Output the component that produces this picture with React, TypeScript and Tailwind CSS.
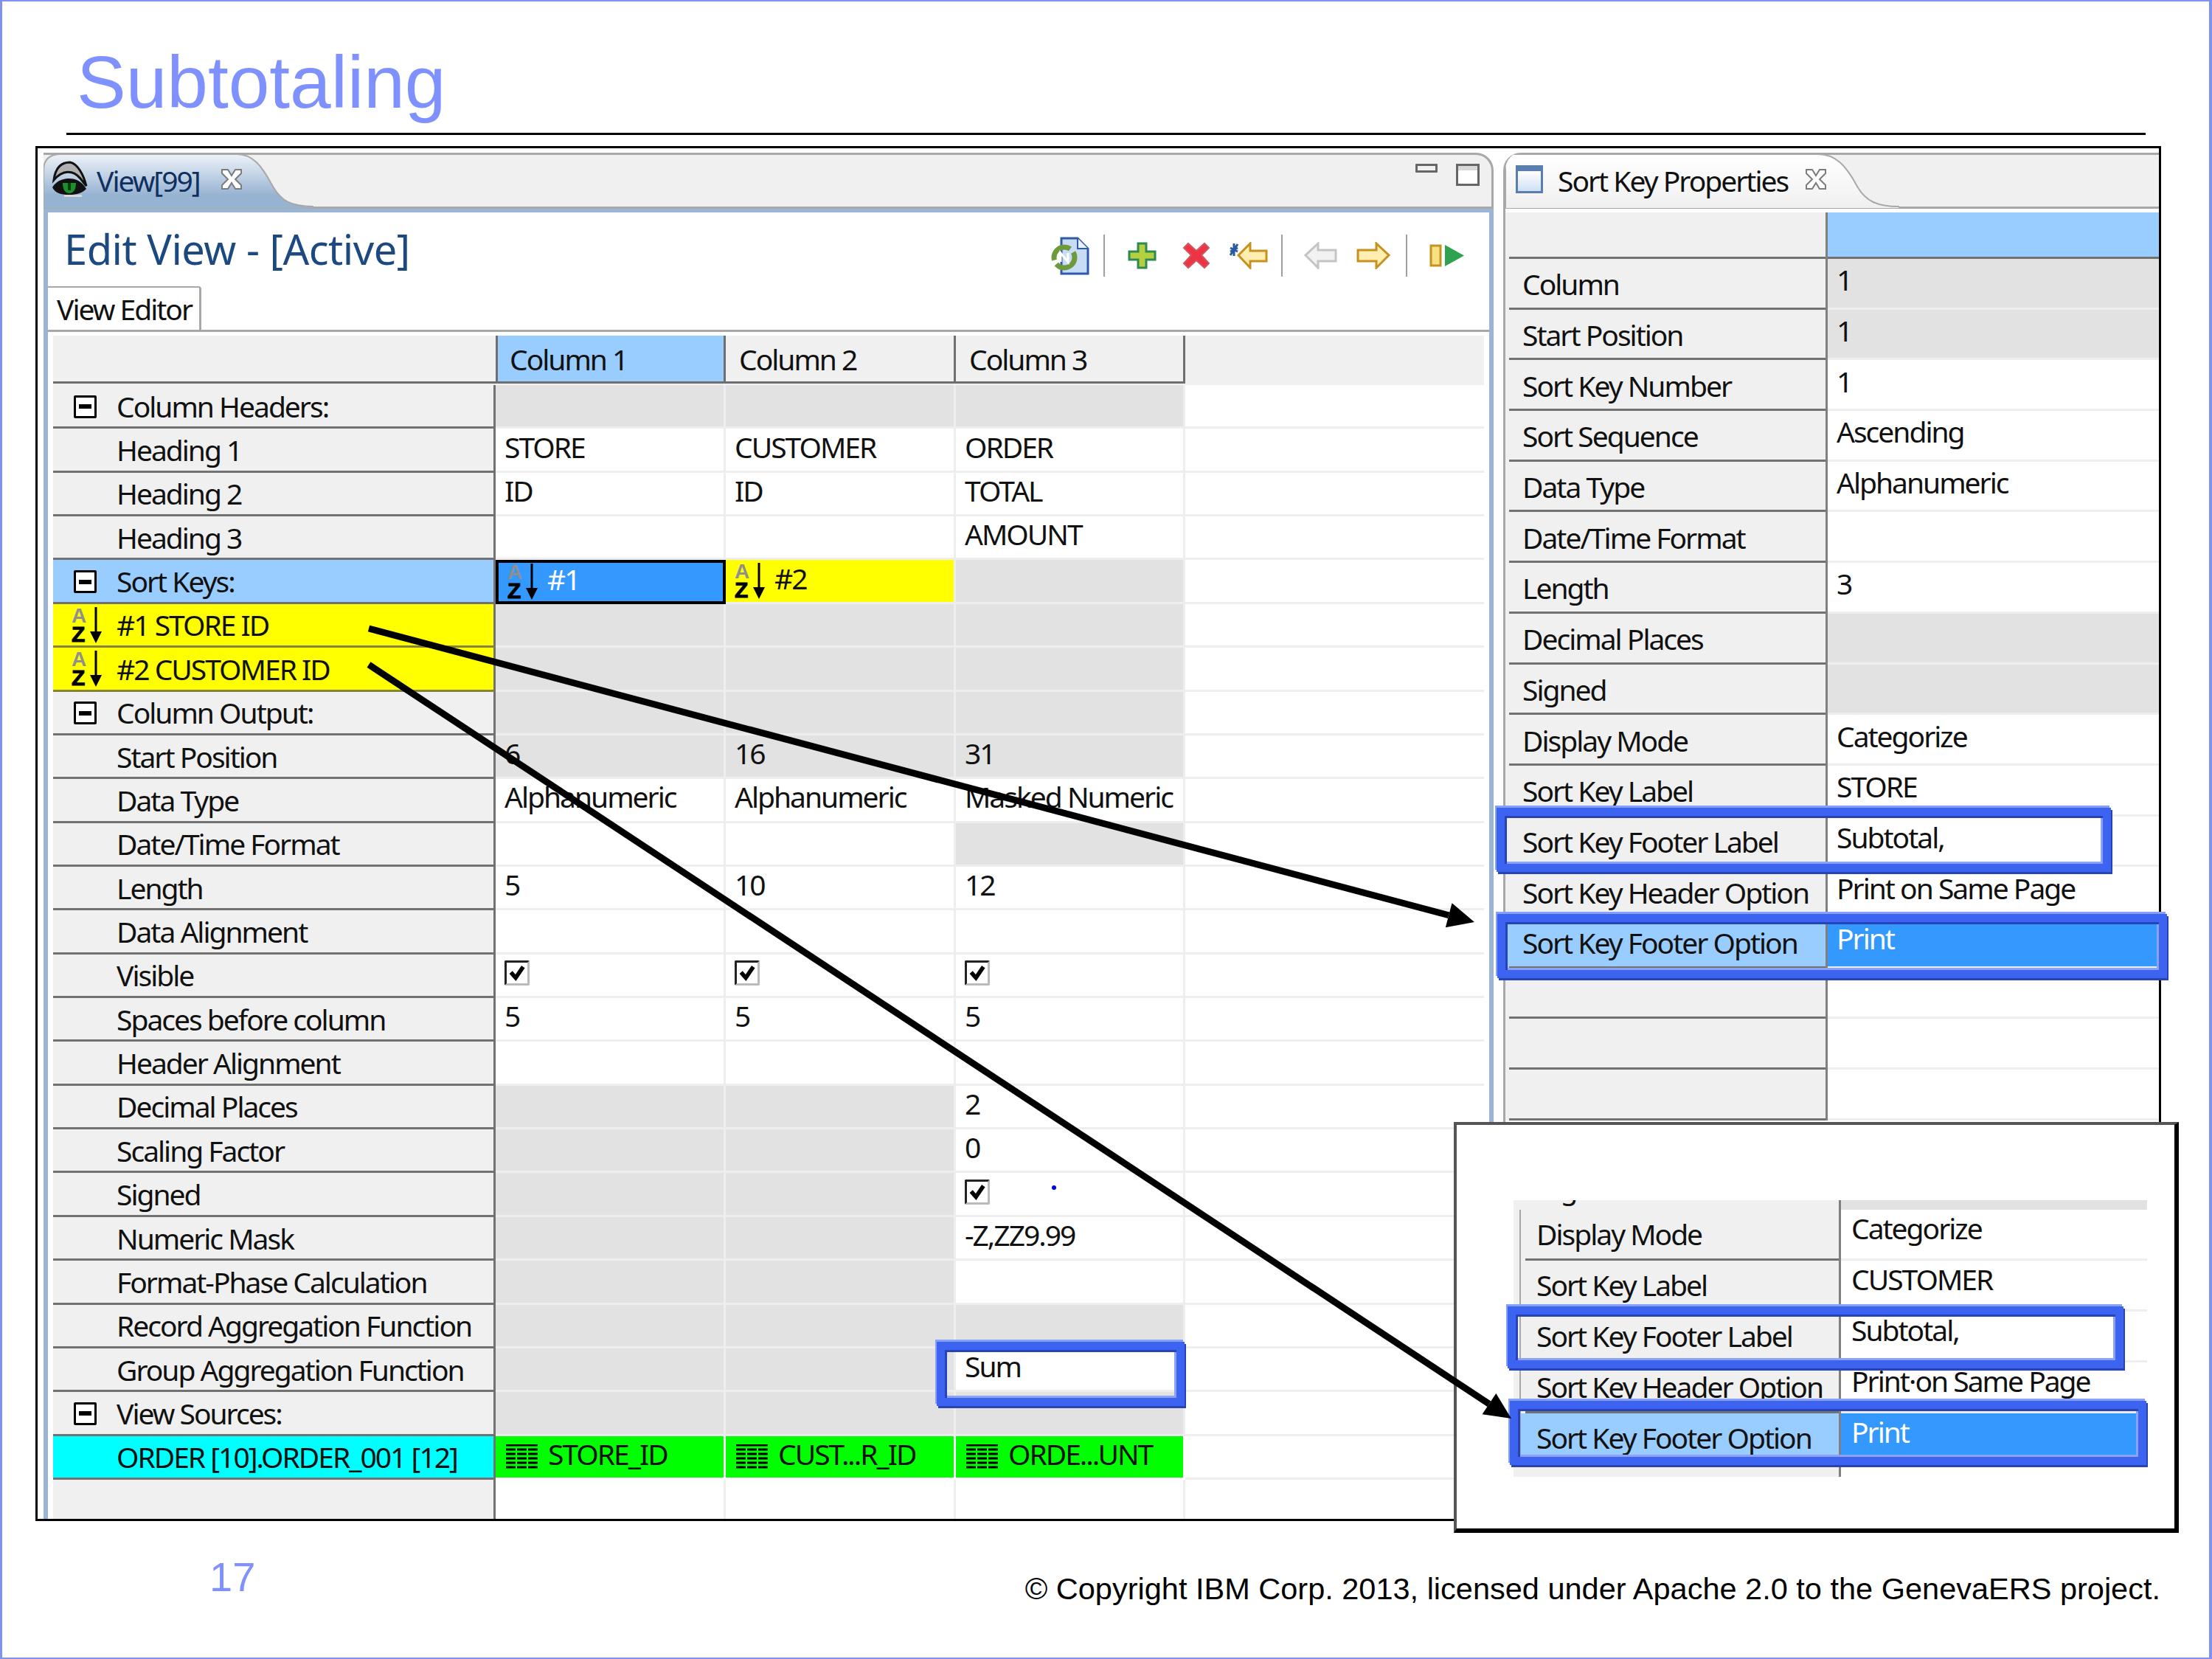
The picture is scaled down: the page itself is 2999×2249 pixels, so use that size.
import type { ReactNode } from "react";

type Tone = "gray" | "white" | "yellow" | "selected" | "green";
type Cell = { text?: string; tone?: Tone; sort?: boolean; grid?: boolean; check?: boolean; dot?: boolean };

const G: Cell = { tone: "gray" };
const W: Cell = {};
const t = (text: string): Cell => ({ text });

const rows: { label: string; box?: boolean; sort?: boolean; tone?: string; cells: Cell[] }[] = [
  { label: "Column Headers:", box: true, cells: [G, G, G] },
  { label: "Heading 1", cells: [t("STORE"), t("CUSTOMER"), t("ORDER")] },
  { label: "Heading 2", cells: [t("ID"), t("ID"), t("TOTAL")] },
  { label: "Heading 3", cells: [W, W, t("AMOUNT")] },
  {
    label: "Sort Keys:",
    box: true,
    tone: "blue",
    cells: [
      { text: "#1", tone: "selected", sort: true },
      { text: "#2", tone: "yellow", sort: true },
      G,
    ],
  },
  { label: "#1 STORE ID", sort: true, tone: "yellow", cells: [G, G, G] },
  { label: "#2 CUSTOMER ID", sort: true, tone: "yellow", cells: [G, G, G] },
  { label: "Column Output:", box: true, cells: [G, G, G] },
  {
    label: "Start Position",
    cells: [
      { text: "6", tone: "gray" },
      { text: "16", tone: "gray" },
      { text: "31", tone: "gray" },
    ],
  },
  { label: "Data Type", cells: [t("Alphanumeric"), t("Alphanumeric"), t("Masked Numeric")] },
  { label: "Date/Time Format", cells: [W, W, G] },
  { label: "Length", cells: [t("5"), t("10"), t("12")] },
  { label: "Data Alignment", cells: [W, W, W] },
  { label: "Visible", cells: [{ check: true }, { check: true }, { check: true }] },
  { label: "Spaces before column", cells: [t("5"), t("5"), t("5")] },
  { label: "Header Alignment", cells: [W, W, W] },
  { label: "Decimal Places", cells: [G, G, t("2")] },
  { label: "Scaling Factor", cells: [G, G, t("0")] },
  { label: "Signed", cells: [G, G, { check: true, dot: true }] },
  { label: "Numeric Mask", cells: [G, G, t("-Z,ZZ9.99")] },
  { label: "Format-Phase Calculation", cells: [G, G, W] },
  { label: "Record Aggregation Function", cells: [G, G, G] },
  { label: "Group Aggregation Function", cells: [G, G, t("Sum")] },
  { label: "View Sources:", box: true, cells: [G, G, G] },
  {
    label: "ORDER [10].ORDER_001 [12]",
    tone: "cyan",
    cells: [
      { text: "STORE_ID", tone: "green", grid: true },
      { text: "CUST...R_ID", tone: "green", grid: true },
      { text: "ORDE...UNT", tone: "green", grid: true },
    ],
  },
];

const props: { label: string; value?: string; gray?: boolean }[] = [
  { label: "Column", value: "1", gray: true },
  { label: "Start Position", value: "1", gray: true },
  { label: "Sort Key Number", value: "1" },
  { label: "Sort Sequence", value: "Ascending" },
  { label: "Data Type", value: "Alphanumeric" },
  { label: "Date/Time Format" },
  { label: "Length", value: "3" },
  { label: "Decimal Places", gray: true },
  { label: "Signed", gray: true },
  { label: "Display Mode", value: "Categorize" },
  { label: "Sort Key Label", value: "STORE" },
  { label: "Sort Key Footer Label", value: "Subtotal," },
  { label: "Sort Key Header Option", value: "Print on Same Page" },
  { label: "Sort Key Footer Option", value: "Print" },
  { label: "" },
  { label: "" },
  { label: "" },
];

const insetRows = [
  { label: "Display Mode", value: "Categorize" },
  { label: "Sort Key Label", value: "CUSTOMER" },
  { label: "Sort Key Footer Label", value: "Subtotal," },
  { label: "Sort Key Header Option", value: "Print·on Same Page" },
];

function Collapse() {
  return (
    <span className="flex h-[31px] w-[31px] items-center justify-center rounded-[2px] border-[3px] border-black bg-white">
      <span className="h-[6px] w-[17px] bg-black" />
    </span>
  );
}

function SortIcon() {
  return (
    <svg viewBox="0 0 42 50" className="h-[50px] w-[42px] shrink-0 overflow-visible">
      <text x="0" y="21" fontSize="28" fontWeight="700" fill="#8f8f8f" fontFamily="Liberation Sans">A</text>
      <text x="0" y="47" fontSize="30" fontWeight="700" fill="#000" stroke="#000" strokeWidth="1" fontFamily="Liberation Sans">Z</text>
      <path d="M33 0V38" stroke="#000" strokeWidth="3" />
      <path d="M25 33H41L33 49Z" fill="#000" />
    </svg>
  );
}

function GridIcon() {
  return (
    <svg viewBox="0 0 47 34" className="h-[34px] w-[47px] shrink-0">
      <path d="M2 1H45" stroke="#000" strokeWidth="3" />
      <path d="M2 7H45M2 13H45M2 19H45M2 25H45M2 31H45" stroke="#000" strokeWidth="3" strokeDasharray="13 2" />
    </svg>
  );
}

function CheckBox() {
  return (
    <span className="mb-[6px] flex h-[34px] w-[34px] items-center justify-center rounded-[2px] border-[3px] border-t-[#222] border-l-[#222] border-r-[#bbbbbb] border-b-[#bbbbbb] bg-white">
      <svg viewBox="0 0 26 26" className="h-[24px] w-[24px]">
        <path d="M4 12L11 20L22 4" fill="none" stroke="#000" strokeWidth="6" />
      </svg>
    </span>
  );
}

function CloseX() {
  return (
    <svg viewBox="0 0 32 32" className="h-[32px] w-[32px] shrink-0">
      <path
        d="M3 3H11L16 11L21 3H29V8L21 16L29 24V29H21L16 21L11 29H3V24L11 16L3 8Z"
        fill="#ffffff"
        stroke="#7c7c7c"
        strokeWidth="2"
      />
    </svg>
  );
}

function EyeIcon() {
  return (
    <svg viewBox="0 0 50 50" className="h-[50px] w-[50px] shrink-0">
      <path d="M4 26C6 10 14 2 26 2C36 4 44 18 48 34L40 24C30 12 16 12 4 26Z" fill="#b0b0b0" stroke="#111" strokeWidth="3" />
      <path d="M2 36C8 26 18 24 25 24C34 24 42 28 48 38C40 46 30 46 24 46C14 46 6 44 2 36Z" fill="#111" />
      <path d="M16 30H34C34 40 30 44 25 44C20 44 16 40 16 30Z" fill="#1d8f2b" />
      <path d="M23 30H27V40H23Z" fill="#0a3d10" />
      <path d="M18 46H42V49H18Z" fill="#d8d8d8" />
    </svg>
  );
}

function Toolbar() {
  const sep = "mx-0 h-[57px] w-[2px] bg-[#a0a0a0]";
  return (
    <div className="flex items-center pr-[33px] pt-[30px]">
      <svg viewBox="0 0 52 52" className="h-[52px] w-[52px]">
        <path d="M14 2H36L50 16V50H14Z" fill="#c9dcf6" stroke="#2f5aa8" strokeWidth="3" />
        <path d="M36 2V16H50" fill="#e9f1fc" stroke="#2f5aa8" strokeWidth="2" />
        <circle cx="18" cy="28" r="14" fill="none" stroke="#6f9a3c" strokeWidth="7" strokeDasharray="34 6" />
        <path d="M13 34V22L23 34V22" fill="none" stroke="#ffffff" strokeWidth="3" />
      </svg>
      <span className={`${sep} ml-[19px]`} />
      <svg viewBox="0 0 39 37" className="ml-[31px] h-[37px] w-[39px]">
        <path d="M14 2H25V13H37V24H25V35H14V24H2V13H14Z" fill="#b4cf3f" stroke="#2c8a52" strokeWidth="3" />
      </svg>
      <svg viewBox="0 0 38 37" className="ml-[35px] h-[37px] w-[38px]">
        <path d="M8 2L19 12L30 2L36 8L26 18L36 29L30 35L19 25L8 35L2 29L12 18L2 8Z" fill="#ee3345" stroke="#cf5560" strokeWidth="2" />
      </svg>
      <svg viewBox="0 0 52 37" className="ml-[26px] h-[37px] w-[52px]">
        <path d="M28 2L12 18L28 35V26H50V12H28Z" fill="#ffeeb0" stroke="#c8911e" strokeWidth="3" />
        <path d="M1 8L11 13M11 3L1 18M6 2V19M1 13L11 8" stroke="#2a5a9c" strokeWidth="3" />
      </svg>
      <span className={`${sep} ml-[18px]`} />
      <svg viewBox="0 0 45 37" className="ml-[29px] h-[37px] w-[45px]">
        <path d="M19 2L2 18L19 35V26H43V11H19Z" fill="#f2f2f2" stroke="#c4c4c4" strokeWidth="3" />
      </svg>
      <svg viewBox="0 0 46 37" className="ml-[26px] h-[37px] w-[46px]">
        <path d="M27 2L44 18L27 35V26H2V11H27Z" fill="#ffeeb0" stroke="#c8911e" strokeWidth="3" />
      </svg>
      <span className={`${sep} ml-[21px]`} />
      <svg viewBox="0 0 48 31" className="ml-[30px] h-[31px] w-[48px]">
        <path d="M2 2H15V29H2Z" fill="#f7df82" stroke="#c4951e" strokeWidth="3" />
        <path d="M21 1L47 15.5L21 30Z" fill="#2fa24f" />
      </svg>
    </div>
  );
}

function TableCell({ cell, width }: { cell: Cell; width: string }) {
  const tone = {
    gray: "bg-[#e2e2e2] text-[#111111] border-[#eeeeee]",
    white: "bg-white text-[#111111] border-[#eeeeee]",
    yellow: "bg-[#ffff00] text-[#111111] border-[#eeeeee]",
    selected: "bg-[#3399ff] text-white border-[#000000] !border-[4px]",
    green: "bg-[#00ff00] text-[#111111] border-white",
  }[cell.tone ?? "white"];
  return (
    <div className={`flex h-full shrink-0 items-center gap-[12px] border-r-[3px] border-b-[3px] pl-[12px] ${width} ${tone}`}>
      {cell.sort && <SortIcon />}
      {cell.grid && <GridIcon />}
      {cell.check && <CheckBox />}
      {cell.dot && <span className="mb-[18px] ml-[72px] h-[6px] w-[6px] rounded-full bg-[#0000e0]" />}
      {cell.text && <span className="pb-[9px]">{cell.text}</span>}
    </div>
  );
}

function LabelTone(tone?: string) {
  if (tone === "blue") return "bg-[#99ccff]";
  if (tone === "yellow") return "bg-[#ffff00] border-b-[#85853a]";
  if (tone === "cyan") return "bg-[#00ffff]";
  return "bg-[#f0f0f0]";
}

function ViewTable() {
  return (
    <div className="ml-[7px] mr-[7px] flex min-h-0 flex-1 flex-col overflow-hidden pt-[5px]">
      <div className="flex h-[67px] shrink-0 bg-[#f0f0f0]">
        <div className="h-[65px] w-[600px] shrink-0 border-b-[3px] border-[#6f6f6f]" />
        <div className="flex h-[65px] w-[312px] shrink-0 items-center border-b-[3px] border-x-[3px] border-[#6f6f6f] bg-[#99ccff] pl-[16px]">Column 1</div>
        <div className="flex h-[65px] w-[312px] shrink-0 items-center border-b-[3px] border-r-[3px] border-[#6f6f6f] pl-[18px]">Column 2</div>
        <div className="flex h-[65px] w-[311px] shrink-0 items-center border-b-[3px] border-r-[3px] border-[#6f6f6f] pl-[18px]">Column 3</div>
      </div>
      {rows.map((row) => (
        <div key={row.label} className="flex h-[59.36px] shrink-0">
          <div className={`flex h-full w-[600px] shrink-0 items-center border-r-[3px] border-b-[3px] border-[#727272] pl-[28px] ${LabelTone(row.tone)}`}>
            <span className="flex w-[58px] shrink-0 items-center pt-[2px]">
              {row.box && <Collapse />}
              {row.sort && <span className="-ml-[3px]"><SortIcon /></span>}
            </span>
            <span className="whitespace-nowrap">{row.label}</span>
          </div>
          <TableCell cell={row.cells[0]} width="w-[312px]" />
          <TableCell cell={row.cells[1]} width="w-[312px]" />
          <TableCell cell={row.cells[2]} width="w-[311px]" />
          <div className="h-full flex-1 border-b-[3px] border-[#eeeeee]" />
        </div>
      ))}
      <div className="flex min-h-0 flex-1">
        <div className="w-[600px] shrink-0 border-r-[3px] border-[#727272] bg-[#f0f0f0]" />
        <div className="w-[312px] shrink-0 border-r-[3px] border-[#eeeeee]" />
        <div className="w-[312px] shrink-0 border-r-[3px] border-[#eeeeee]" />
        <div className="w-[311px] shrink-0 border-r-[3px] border-[#eeeeee]" />
      </div>
    </div>
  );
}

function LeftPanel() {
  return (
    <section className="flex w-[1966px] shrink-0 flex-col">
      <div className="relative flex h-[76px] shrink-0 items-start justify-between rounded-tr-[24px] border-t-[3px] border-r-[3px] border-b-[3px] border-[#a8a8a8] bg-[#f0f0f0]">
        <svg viewBox="0 0 366 76" preserveAspectRatio="none" className="absolute -top-[3px] left-0 h-[76px] w-[366px]">
          <defs>
            <linearGradient id="tabBlue" x1="0" y1="0" x2="0" y2="1">
              <stop offset="0" stopColor="#eef3f9" />
              <stop offset="0.75" stopColor="#97b3d2" />
            </linearGradient>
          </defs>
          <path d="M0 76V24Q0 2 24 2H262C284 2 296 18 310 44C322 66 336 73 366 73V76Z" fill="url(#tabBlue)" stroke="#a8a8a8" strokeWidth="2" />
        </svg>
        <div className="relative flex items-center pl-[10px] pt-[8px]">
          <EyeIcon />
          <span className="ml-[12px] pt-[3px] text-[#10305f]">View[99]</span>
          <span className="ml-[27px]"><CloseX /></span>
        </div>
        <div className="flex items-start gap-[25px] pr-[16px] pt-[12px]">
          <span className="h-[12px] w-[30px] rounded-[1px] border-[3px] border-[#666666]" />
          <span className="h-[30px] w-[32px] border-[3px] border-[#666666] bg-white shadow-[inset_0_6px_0_#d8d8d8]" />
        </div>
      </div>
      <div className="flex min-h-0 flex-1 flex-col border-x-[6px] border-t-[5px] border-[#9bb5d6] bg-white">
        <div className="flex h-[100px] shrink-0 items-start justify-between">
          <h2 className="pl-[22px] pt-[21px] text-[56px] leading-none tracking-[-0.5px] text-[#1c4a80]">Edit View - [Active]</h2>
          <Toolbar />
        </div>
        <div className="flex h-[62px] shrink-0 border-b-[3px] border-[#a8a8a8]">
          <div className="flex w-[208px] items-center rounded-tr-[4px] border-t-[2px] border-r-[3px] border-[#a8a8a8] pl-[12px]">View Editor</div>
        </div>
        <ViewTable />
      </div>
    </section>
  );
}

function PropRow({ label, value, gray, footer }: { label: string; value?: string; gray?: boolean; footer?: boolean }) {
  return (
    <div className="flex h-[68.7px] shrink-0">
      <div className={`h-full w-[437px] shrink-0 border-r-[3px] border-[#808080] pl-[5px] ${footer ? "bg-[#99ccff]" : "bg-[#f0f0f0]"}`}>
        <div className="flex h-full items-center border-b-[3px] border-[#727272] pl-[18px] pt-[2px]">{label}</div>
      </div>
      <div className={`flex h-full flex-1 items-center border-b-[3px] border-[#eeeeee] pb-[10px] pl-[12px] ${footer ? "bg-[#3399ff] text-white" : gray ? "bg-[#e2e2e2]" : "bg-white"}`}>{value}</div>
    </div>
  );
}

function RightPanel() {
  return (
    <section className="ml-[13px] flex min-w-0 flex-1 flex-col overflow-hidden rounded-tl-[24px] border-l-[3px] border-[#a8a8a8]">
      <div className="relative flex h-[76px] shrink-0 items-start border-t-[3px] border-b-[3px] border-[#a8a8a8] bg-[#f0f0f0]">
        <svg viewBox="0 0 534 76" preserveAspectRatio="none" className="absolute -top-[3px] left-0 h-[76px] w-[534px]">
          <defs>
            <linearGradient id="tabWhite" x1="0" y1="0" x2="0" y2="1">
              <stop offset="0" stopColor="#ffffff" />
              <stop offset="1" stopColor="#f0f0f0" />
            </linearGradient>
          </defs>
          <path d="M0 76V2H424C448 2 462 18 476 44C488 66 504 73 534 73V76Z" fill="url(#tabWhite)" stroke="#a8a8a8" strokeWidth="2" />
        </svg>
        <div className="relative flex items-center pl-[14px] pt-[12px]">
          <span className="h-[38px] w-[37px] shrink-0 border-[3px] border-t-[8px] border-[#5a7fae] bg-gradient-to-b from-white to-[#cfe0f2]" />
          <span className="ml-[20px] whitespace-nowrap pt-[3px]">Sort Key Properties</span>
          <span className="ml-[22px]"><CloseX /></span>
        </div>
      </div>
      <div className="flex h-[68px] shrink-0 pt-[5px]">
        <div className="h-full w-[437px] shrink-0 border-r-[3px] border-[#808080] bg-[#f0f0f0] pl-[5px]">
          <div className="h-full border-b-[3px] border-[#727272]" />
        </div>
        <div className="h-full flex-1 border-b-[3px] border-[#727272] bg-[#99ccff]" />
      </div>
      {props.map((prop, i) => (
        <PropRow key={prop.label + i} label={prop.label} value={prop.value} gray={prop.gray} footer={prop.label === "Sort Key Footer Option"} />
      ))}
    </section>
  );
}

function InsetRow({ label, value, footer, h = "h-[69px]" }: { label: string; value?: string; footer?: boolean; h?: string }) {
  return (
    <div className={`flex shrink-0 overflow-hidden ${h}`}>
      <div className="h-full w-[444px] shrink-0 border-r-[3px] border-[#808080] bg-[#f0f0f0] pl-[8px]">
        <div className={`h-full border-l-[2px] border-[#a8a8a8] pl-[6px] ${footer ? "bg-[#99ccff]" : ""}`}>
          <div className="flex h-full items-center border-b-[3px] border-[#727272] pb-[2px] pl-[15px]">{label}</div>
        </div>
      </div>
      <div className={`flex h-full flex-1 items-center border-b-[3px] border-[#eeeeee] pb-[18px] pl-[14px] ${footer ? "bg-[#3399ff] text-white" : "bg-white"}`}>{value}</div>
    </div>
  );
}

function Callout({ pos }: { pos: string }) {
  return (
    <div
      className={`absolute border-[11px] border-[#3d64f0] shadow-[-2px_-3px_0_#86a0f8,2px_3px_0_#2743b8,inset_3px_3px_0_#2743b8,inset_-3px_-3px_0_#8aa2f8] ${pos}`}
    />
  );
}

function Inset() {
  return (
    <div className="absolute left-[1968px] top-[1519px] h-[557px] w-[983px] border-t-[4px] border-l-[4px] border-r-[6px] border-b-[6px] border-t-[#555555] border-l-[#555555] border-r-black border-b-black bg-white pl-[77px] pr-[37px] pt-[102px]">
      <div className="flex h-[13px] overflow-hidden">
        <div className="h-full w-[444px] shrink-0 border-r-[3px] border-[#808080] bg-[#f0f0f0] pl-[36px]">
          <div className="-mt-[36px]">Signed</div>
        </div>
        <div className="h-full flex-1 bg-[#e2e2e2]" />
      </div>
      {insetRows.map((row) => (
        <InsetRow key={row.label} label={row.label} value={row.value} />
      ))}
      <InsetRow label="Sort Key Footer Option" value="Print" footer />
      <div className="flex h-[17px]">
        <div className="h-full w-[444px] shrink-0 border-r-[3px] border-[#808080] bg-[#f0f0f0]" />
      </div>
    </div>
  );
}

function Arrow({ x1, y1, x2, y2 }: { x1: number; y1: number; x2: number; y2: number }) {
  const len = Math.hypot(x2 - x1, y2 - y1);
  const ux = (x2 - x1) / len;
  const uy = (y2 - y1) / len;
  const bx = x2 - ux * 36;
  const by = y2 - uy * 36;
  const head = `${x2},${y2} ${bx - uy * 17},${by + ux * 17} ${bx + uy * 17},${by - ux * 17}`;
  return (
    <>
      <line x1={x1} y1={y1} x2={bx} y2={by} stroke="#000" strokeWidth="9" />
      <polygon points={head} fill="#000" />
    </>
  );
}

function Page({ children }: { children: ReactNode }) {
  return (
    <div className="relative h-[2249px] w-[2999px] overflow-hidden border-t-[2px] border-b-[2px] border-l-[3px] border-r-[4px] border-[#7f91f5] bg-white [font-family:'Liberation_Sans',Arial,sans-serif]">
      {children}
    </div>
  );
}

export default function App() {
  return (
    <Page>
      <h1 className="pl-[101px] pt-[59px] text-[100px] leading-none text-[#7f91ff]">Subtotaling</h1>
      <div className="ml-[87px] mr-[86px] mt-[19px] h-[3px] bg-black" />
      <main className="ml-[45px] mt-[15px] flex h-[1864px] w-[2882px] overflow-hidden border-[3px] border-black bg-white pl-[8px] pt-[6px] text-[39px] leading-none tracking-[-2px] text-[#111111] [font-family:'Noto_Sans',sans-serif]">
        <LeftPanel />
        <RightPanel />
      </main>
      <footer className="flex items-start justify-between pl-[281px] pr-[66px] pt-[48px]">
        <span className="text-[56px] leading-none text-[#7f91ff]">17</span>
        <span className="mt-[23px] text-[41.5px] leading-none text-black">© Copyright IBM Corp. 2013, licensed under Apache 2.0 to the GenevaERS project.</span>
      </footer>

      <Callout pos="left-[1267px] top-[1817px] h-[87px] w-[336px]" />
      <Callout pos="left-[2026px] top-[1093px] h-[87px] w-[833px]" />
      <Callout pos="left-[2027px] top-[1237px] h-[87px] w-[908px]" />

      <div className="text-[39px] leading-none tracking-[-2px] text-[#111111] [font-family:'Noto_Sans',sans-serif]">
        <Inset />
        <Callout pos="left-[2041px] top-[1769px] h-[84px] w-[835px]" />
        <Callout pos="left-[2044px] top-[1897px] h-[87px] w-[863px]" />
      </div>

      <svg viewBox="0 0 2992 2245" className="pointer-events-none absolute inset-0 h-[2245px] w-[2992px]">
        <Arrow x1={497} y1={850} x2={1996} y2={1248} />
        <Arrow x1={497} y1={899} x2={2046} y2={1921} />
      </svg>
    </Page>
  );
}
